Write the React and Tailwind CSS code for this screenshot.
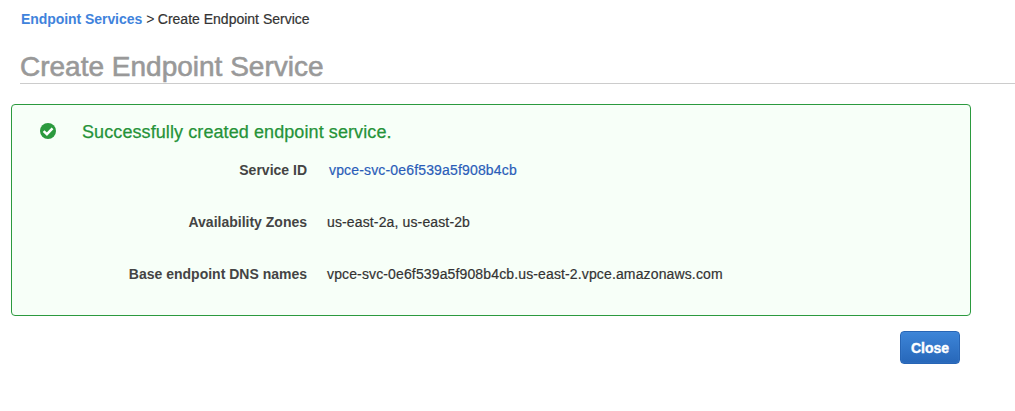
const details = [
  { label: "Service ID", value: "vpce-svc-0e6f539a5f908b4cb", link: true },
  { label: "Availability Zones", value: "us-east-2a, us-east-2b" },
  {
    label: "Base endpoint DNS names",
    value: "vpce-svc-0e6f539a5f908b4cb.us-east-2.vpce.amazonaws.com",
  },
];

function SuccessIcon() {
  return (
    <svg viewBox="0 0 16 16" className="-mt-0.5 size-4 shrink-0" aria-hidden="true">
      <circle cx="8" cy="8" r="8" fill="#2b9a3e" />
      <path d="M3.6 8.1 6.9 11.2 12.5 5.3" fill="none" stroke="#fff" strokeWidth="2.5" />
    </svg>
  );
}

function Breadcrumb() {
  return (
    <nav className="flex h-5 items-center pl-[21px] whitespace-nowrap">
      <a href="#" className="font-bold tracking-[-0.06px] text-[#3f83dc]">Endpoint Services</a>
      <span className="ml-1">&gt;</span>
      <span className="ml-[3.5px] [-webkit-text-stroke:0.2px]">Create Endpoint Service</span>
    </nav>
  );
}

function DetailRow({ label, value, link }) {
  return (
    <div className="flex h-5 items-center whitespace-nowrap">
      <dt className="w-[295px] text-right font-bold text-[#444]">{label}</dt>
      <dd
        className={
          link
            ? "ml-[22px] tracking-[0.16px] text-[#2a5db8] [-webkit-text-stroke:0.2px]"
            : "ml-5 tracking-[0.135px] [-webkit-text-stroke:0.2px]"
        }
      >
        {link ? <a href="#">{value}</a> : value}
      </dd>
    </div>
  );
}

export default function App() {
  return (
    <main className="h-[411px] overflow-hidden bg-white pt-[9px] font-['Liberation_Sans',Arial,sans-serif] text-sm leading-5 text-[#333]">
      <Breadcrumb />
      <h1 className="mt-[17px] ml-5 h-[38px] border-b border-[#ccc] text-[28px] leading-[41px] whitespace-nowrap text-[#999] [-webkit-text-stroke:0.6px]">
        Create Endpoint Service
      </h1>
      <section className="mt-5 ml-[11px] h-[212px] w-[960px] rounded-[4px] border border-[#2b9a3e] bg-[#f7fff8] pt-[15px]">
        <div className="flex h-6 items-center pl-7 text-[#259338]">
          <SuccessIcon />
          <h2 className="ml-[26px] text-lg leading-6 tracking-[0.09px] whitespace-nowrap [-webkit-text-stroke:0.25px]">
            Successfully created endpoint service.
          </h2>
        </div>
        <dl className="mt-4 flex flex-col gap-8">
          {details.map((row) => (
            <DetailRow key={row.label} {...row} />
          ))}
        </dl>
      </section>
      <div className="mt-[15px] flex w-[960px] justify-end">
        <button className="h-[33px] w-[60px] rounded-[4px] border border-[#2765b5] bg-linear-to-b from-[#3d85d8] to-[#2767b9] text-sm font-bold text-white inset-shadow-[0_0_1px_#5b9be2] [-webkit-text-stroke:0.4px]">
          Close
        </button>
      </div>
    </main>
  );
}
